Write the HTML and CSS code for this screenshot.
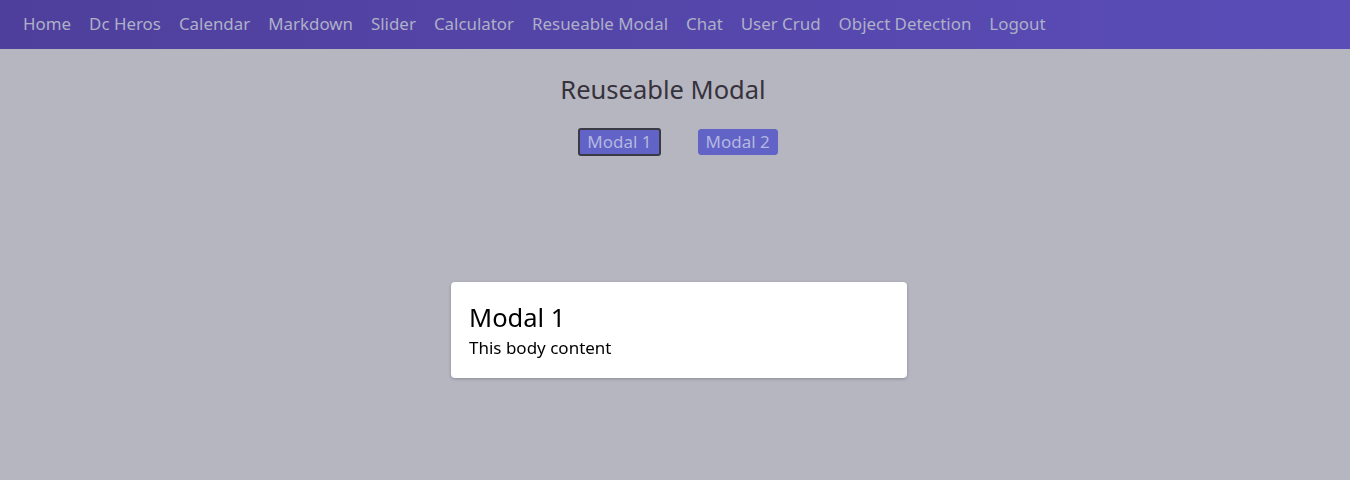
FILE: index.html
```html
<!DOCTYPE html>
<html lang="en">
<head>
<meta charset="utf-8">
<title>Reuseable Modal</title>
<link rel="stylesheet" href="styles.css">
</head>
<body>
<nav class="navbar">
  <a class="nav-link" href="#">Home</a>
  <a class="nav-link" href="#">Dc Heros</a>
  <a class="nav-link" href="#">Calendar</a>
  <a class="nav-link" href="#">Markdown</a>
  <a class="nav-link" href="#">Slider</a>
  <a class="nav-link" href="#">Calculator</a>
  <a class="nav-link" href="#">Resueable Modal</a>
  <a class="nav-link" href="#">Chat</a>
  <a class="nav-link" href="#">User Crud</a>
  <a class="nav-link" href="#">Object Detection</a>
  <a class="nav-link" href="#">Logout</a>
</nav>
<main class="page">
  <h1 class="page-title">Reuseable Modal</h1>
  <div class="btn-row">
    <button class="btn btn-active">Modal 1</button>
    <button class="btn">Modal 2</button>
  </div>
</main>
<div class="overlay">
  <div class="modal">
    <h2 class="modal-title">Modal 1</h2>
    <p class="modal-body">This body content</p>
  </div>
</div>
</body>
</html>
```
FILE: styles.css
```css
html, body {
  margin: 0;
  padding: 0;
}
body {
  background: #b6b6c0;
  font-family: "Noto Sans", "Open Sans", sans-serif;
  height: 480px;
  overflow: hidden;
}
.navbar {
  height: 49px;
  display: flex;
  align-items: center;
  gap: 18px;
  padding: 0 23px;
  background: linear-gradient(90deg, #4f3f9c 0%, #5a4db8 100%);
}
.nav-link {
  color: #aeb0c8;
  text-decoration: none;
  font-size: 16.9px;
  line-height: 20px;
  padding-bottom: 2px;
}
.page {
  display: flex;
  flex-direction: column;
  align-items: center;
}
.page-title {
  margin: 24px 0 0 0;
  font-weight: 400;
  font-size: 25.5px;
  line-height: 32px;
  color: #36323c;
  transform: translateX(-12px);
}
.btn-row {
  display: flex;
  gap: 37px;
  margin-top: 23px;
  padding-left: 6px;
  align-items: center;
}
.btn {
  font-family: inherit;
  font-size: 17px;
  line-height: 20px;
  color: #b4b8e0;
  background: #6163c6;
  border: 1px solid #6163c6;
  border-radius: 3px;
  padding: 2px 7px;
  height: 26px;
}
.btn-active {
  border: 2px solid #3a3a46;
  height: 28px;
  padding: 2px 7px;
}
.overlay {
  position: fixed;
  inset: 0;
  display: flex;
  justify-content: center;
  align-items: flex-start;
  padding-top: 282px;
  padding-left: 8px;
}
.modal {
  width: 456px;
  height: 96px;
  box-sizing: border-box;
  background: #ffffff;
  border-radius: 4px;
  box-shadow: 0 1px 3px rgba(60, 60, 80, 0.35);
  padding: 19px 18px;
}
.modal-title {
  margin: 0;
  font-weight: 400;
  font-size: 25.5px;
  line-height: 32px;
  color: #000;
}
.modal-body {
  margin: 4px 0 0 0;
  font-size: 17px;
  line-height: 22px;
  color: #000;
}
```
